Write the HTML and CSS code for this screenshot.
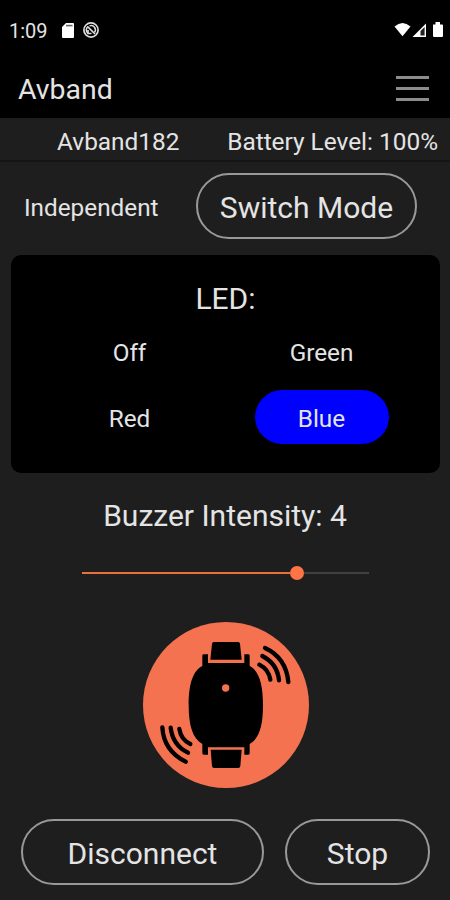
FILE: index.html
```html
<!DOCTYPE html>
<html lang="en">
<head>
  <meta charset="UTF-8">
  <meta name="viewport" content="width=device-width, initial-scale=1.0">
  <title>Avband</title>
  <link rel="stylesheet" href="styles.css">
</head>
<body>
  <div class="status-bar">
    <span class="time">1:09</span>
    <svg class="sd-icon" width="12" height="15" viewBox="0 0 12 15">
      <path d="M4 0H11a1 1 0 0 1 1 1V14a1 1 0 0 1-1 1H1a1 1 0 0 1-1-1V4z" fill="#fff"/>
      <path d="M4 2.600H10.600" stroke="#666" stroke-width="1.600"/>
    </svg>
    <svg class="sync-icon" width="16" height="16" viewBox="0 0 16 16" fill="none" stroke="#ddd">
      <circle cx="8" cy="8" r="7.1" stroke-width="1.7"/>
      <path d="M5 11.500A4.300 4.300 0 0 1 5 4.600M6.500 3.900A4.300 4.300 0 0 1 11.500 10.500" stroke-width="1.5"/>
      <path d="M4.500 4.500L12 12M5 8V11.500H8.500" stroke-width="1.7"/>
    </svg>
    <svg class="signal-icons" width="50" height="17" viewBox="0 0 50 17">
      <path d="M0.500 4.500Q8.500-2.500 16.500 4.500L8.500 14.300z" fill="#fff"/>
      <path d="M18.500 15L32 1.500V15z" fill="#fff"/>
      <path d="M26.500 13.500V9L30.600 5V13.500z" fill="#222"/>
      <path d="M39 2.500H41.500V0H46V2.500H48a1 1 0 0 1 1 1V14a1 1 0 0 1-1 1H40a1 1 0 0 1-1-1z" fill="#fff"/>
    </svg>
  </div>

  <header class="app-bar">
    <h1>Avband</h1>
    <button class="menu" aria-label="Menu">
      <span></span>
      <span></span>
      <span></span>
    </button>
  </header>

  <div class="device-bar">
    <span class="device-name">Avband182</span>
    <span>Battery Level: 100%</span>
  </div>

  <div class="mode-row">
    <span class="mode">Independent</span>
    <button class="outline-button switch">Switch Mode</button>
  </div>

  <section class="led-card">
    <h2>LED:</h2>
    <div class="led-options">
      <button class="led">Off</button>
      <button class="led">Green</button>
      <button class="led">Red</button>
      <button class="led selected">Blue</button>
    </div>
  </section>

  <section class="buzzer">
    <h2>Buzzer Intensity: 4</h2>
    <div class="slider">
      <div class="slider-fill"></div>
      <div class="slider-thumb"></div>
      <div class="slider-rest"></div>
    </div>
    <svg class="band" width="166" height="166" viewBox="24 21 498 498">
      <circle cx="273" cy="270" r="249" fill="#f57250"/>
      <!-- case with lugs -->
      <path d="M202 122Q202 118 206 118H219V144H328V118H340Q344 118 344 122V153C374 168 384 212 384 270C384 330 374 370 344 387V415Q344 419 340 419H328V397H219V419H206Q202 419 202 415V387C172 370 161 330 161 270C161 212 172 168 202 153z"/>
      <!-- straps -->
      <path d="M236 81H310Q314 81 315 86L320 134H226L231 86Q232 81 236 81z"/>
      <path d="M227 404H320L316 453Q315 459 310 459H237Q232 459 231 453z"/>
      <circle cx="272" cy="219" r="11" fill="#f57250"/>
      <!-- vibration waves -->
      <g fill="none" stroke="#000" stroke-width="13" stroke-linecap="round">
        <path d="M390 99Q453 128 460 201"/>
        <path d="M382 123Q427 146 432 196"/>
        <path d="M373 149Q401 163 406 194"/>
        <path d="M82 337Q86 407 152 440"/>
        <path d="M107 338Q113 390 159 413"/>
        <path d="M133 342Q138 374 166 387"/>
      </g>
    </svg>
  </section>

  <footer class="actions">
    <button class="outline-button disconnect">Disconnect</button>
    <button class="outline-button stop">Stop</button>
  </footer>
</body>
</html>
```
FILE: styles.css
```css
* {
  box-sizing: border-box;
}
body {
  margin: 0;
  height: 900px;
  overflow: hidden;
  display: flex;
  flex-direction: column;
  background-color: #1e1e1e;
  color: #e4e4e4;
  font-family: Roboto, sans-serif;
  font-size: 24.3px;
}
h1, h2 {
  margin: 0;
  font-weight: normal;
}
button {
  padding: 0;
  border: none;
  background: none;
  color: inherit;
  font-family: inherit;
}
svg {
  display: block;
}

.status-bar {
  height: 60px;
  padding: 0 6px 0 9px;
  display: flex;
  align-items: center;
  background-color: #000;
}
.time {
  width: 53px;
  padding-top: 1px;
  font-size: 20px;
}
.sync-icon {
  margin-left: 9px;
}
.signal-icons {
  margin-left: auto;
}

.app-bar {
  height: 58px;
  padding: 0 21px 0 18px;
  display: flex;
  align-items: center;
  justify-content: space-between;
  background-color: #000;
}
.app-bar h1 {
  font-size: 28.4px;
}
.menu {
  width: 33px;
  margin-bottom: 2px;
  display: grid;
  gap: 8px;
}
.menu span {
  height: 3px;
  background-color: #8c8c8c;
}

.device-bar {
  height: 44px;
  padding: 4px 12px 0 57px;
  display: flex;
  align-items: center;
  justify-content: space-between;
  border-bottom: 2px solid #151515;
  font-size: 24.4px;
}

.mode-row {
  height: 93px;
  padding: 11px 33px 0 24px;
  display: flex;
  align-items: flex-start;
  justify-content: space-between;
}
.mode {
  line-height: 70px;
}
.outline-button {
  height: 66px;
  padding-top: 2px;
  border: 2px solid #999;
  border-radius: 33px;
  font-size: 30px;
}
.switch {
  width: 221px;
}

.led-card {
  height: 218px;
  margin: 0 10px 0 11px;
  padding-top: 24px;
  background-color: #000;
  border-radius: 10px;
}
.led-card h2 {
  font-size: 30px;
  line-height: 39px;
  text-align: center;
}
.led-options {
  display: grid;
  grid-template-columns: 192px 192px;
  grid-auto-rows: 66px;
  justify-content: center;
  place-items: center;
}
.led {
  width: 134px;
  height: 54px;
  padding-top: 2px;
  border-radius: 27px;
  font-size: 24.3px;
}
.selected {
  background-color: #0000ff;
}

.buzzer {
  display: flex;
  flex-direction: column;
  align-items: center;
  padding-top: 23px;
}
.buzzer h2 {
  font-size: 30px;
  line-height: 40px;
}
.slider {
  width: 287px;
  height: 14px;
  margin-top: 30px;
  display: flex;
  align-items: center;
}
.slider-fill {
  width: 208px;
  height: 2px;
  background-color: #e8703f;
}
.slider-thumb {
  width: 14px;
  height: 14px;
  border-radius: 50%;
  background-color: #ff7444;
}
.slider-rest {
  flex: 1;
  height: 2px;
  background-color: #404040;
}
.band {
  margin: 42px 0 0 2px;
}

.actions {
  margin-top: 31px;
  padding: 0 20px 0 21px;
  display: flex;
  justify-content: space-between;
}
.disconnect {
  width: 243px;
}
.stop {
  width: 145px;
}
```
